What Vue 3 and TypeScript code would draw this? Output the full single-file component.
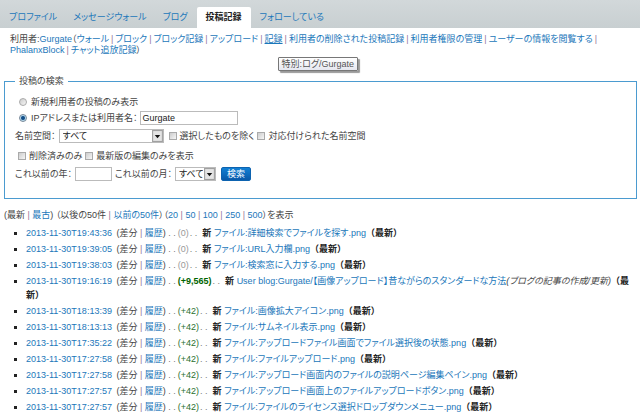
<script setup lang="ts">
import { ref } from 'vue'

interface Entry {
  time: string
  diff: string
  big?: boolean
  title: string
  comment?: string
}

const tabs: string[] = ['プロファイル', 'メッセージウォール', 'ブログ', '投稿記録', 'フォローしている']
const activeTab = ref('投稿記録')

const tools: string[] = [
  'ウォール',
  'ブロック',
  'ブロック記録',
  'アップロード',
  '記録',
  '利用者の削除された投稿記録',
  '利用者権限の管理',
  'ユーザーの情報を閲覧する',
  'PhalanxBlock',
  'チャット追放記録',
]

const limits: number[] = [20, 50, 100, 250, 500]

const mode = ref('user')
const user = ref('Gurgate')
const year = ref('')

const entries: Entry[] = [
  { time: '2013-11-30T19:43:36', diff: '0', title: 'ファイル:詳細検索でファイルを探す.png' },
  { time: '2013-11-30T19:39:05', diff: '0', title: 'ファイル:URL入力欄.png' },
  { time: '2013-11-30T19:38:03', diff: '0', title: 'ファイル:検索窓に入力する.png' },
  {
    time: '2013-11-30T19:16:19',
    diff: '+9,565',
    big: true,
    title: 'User blog:Gurgate/【画像アップロード】昔ながらのスタンダードな方法',
    comment: 'ブログの記事の作成/更新',
  },
  { time: '2013-11-30T18:13:39', diff: '+42', title: 'ファイル:画像拡大アイコン.png' },
  { time: '2013-11-30T18:13:13', diff: '+42', title: 'ファイル:サムネイル表示.png' },
  { time: '2013-11-30T17:35:22', diff: '+42', title: 'ファイル:アップロードファイル画面でファイル選択後の状態.png' },
  { time: '2013-11-30T17:27:58', diff: '+42', title: 'ファイル:ファイルアップロード.png' },
  { time: '2013-11-30T17:27:58', diff: '+42', title: 'ファイル:アップロード画面内のファイルの説明ページ編集ペイン.png' },
  { time: '2013-11-30T17:27:57', diff: '+42', title: 'ファイル:アップロード画面上のファイルアップロードボタン.png' },
  { time: '2013-11-30T17:27:57', diff: '+42', title: 'ファイル:ファイルのライセンス選択ドロップダウンメニュー.png' },
]
</script>

<template>
  <div class="page">
    <nav class="tabs">
      <a
        v-for="tab in tabs"
        :key="tab"
        href="#"
        class="tab"
        :class="{ active: tab === activeTab }"
        @click.prevent="activeTab = tab"
      >{{ tab }}</a>
    </nav>

    <div class="tools">
      利用者:<a href="#">Gurgate</a>（<template v-for="(tool, i) in tools" :key="tool"><span v-if="tool === '記録'" class="tip-anchor"><a href="#" class="hovered">{{ tool }}</a><span class="tip" role="tooltip">特別:ログ/Gurgate</span></span><a v-else href="#">{{ tool }}</a><span v-if="i < tools.length - 1" class="sep bar">|</span><wbr></template>）
    </div>

    <form class="search" @submit.prevent>
      <fieldset>
        <legend>投稿の検索</legend>
        <div class="row inset">
          <input id="newbie" v-model="mode" type="radio" name="mode" value="newbie">
          <label for="newbie">新規利用者の投稿のみ表示</label>
        </div>
        <div class="row inset">
          <input id="byuser" v-model="mode" type="radio" name="mode" value="user">
          <label id="byuser-label" for="byuser">IPアドレスまたは利用者名：</label>
          <input v-model="user" type="text" class="name" aria-labelledby="byuser-label">
        </div>
        <div class="row spaced">
          <label for="ns">名前空間：</label>
          <span class="select wide">
            <select id="ns"><option>すべて</option></select>
            <svg viewBox="0 0 10 11" aria-hidden="true"><rect x=".5" y=".5" width="9" height="10" fill="#e4e4e4" stroke="#a0a0a0" /><path d="M2.5 4.5h5L5 7.5z" fill="#111" /></svg>
          </span>
          <input id="invert" type="checkbox">
          <label for="invert">選択したものを除く</label>
          <input id="assoc" type="checkbox">
          <label for="assoc">対応付けられた名前空間</label>
        </div>
        <div class="row spaced edge">
          <input id="deleted" type="checkbox">
          <label for="deleted">削除済みのみ</label>
          <input id="top" type="checkbox">
          <label for="top">最新版の編集のみを表示</label>
        </div>
        <div class="row spaced">
          <label for="year">これ以前の年：</label>
          <input id="year" v-model="year" type="text" class="year">
          <label for="month">これ以前の月：</label>
          <span class="select">
            <select id="month"><option>すべて</option></select>
            <svg viewBox="0 0 10 11" aria-hidden="true"><rect x=".5" y=".5" width="9" height="10" fill="#e4e4e4" stroke="#a0a0a0" /><path d="M2.5 4.5h5L5 7.5z" fill="#111" /></svg>
          </span>
          <button type="submit">検索</button>
        </div>
      </fieldset>
    </form>

    <p class="pager">
      (最新<span class="sep"> | </span><a href="#">最古</a>) （以後の50件<span class="sep"> | </span><a href="#">以前の50件</a>）（<template v-for="(n, i) in limits" :key="n"><span v-if="i > 0" class="sep"> | </span><a href="#">{{ n }}</a></template>）を表示
    </p>

    <ul class="log">
      <li v-for="(e, i) in entries" :key="i">
        <a href="#" class="time">{{ e.time }}</a> (差分<span class="sep"> | </span><a href="#">履歴</a>)
        <span class="dots">. .</span>
        <span class="diff" :class="{ zero: e.diff === '0', big: e.big }">({{ e.diff }})</span>
        <span class="dots">. .</span>&nbsp;
        <b>新</b> <a href="#">{{ e.title }}</a>
        <em v-if="e.comment">({{ e.comment }})</em>
        <b class="latest">（最新）</b>
      </li>
    </ul>
  </div>
</template>

<style>
body {
  margin: 0;
  background: #fff;
}
</style>

<style scoped>
.page {
  font: 9px/14px "Liberation Sans", "Noto Sans CJK JP", sans-serif;
  font-feature-settings: "palt";
  color: #444;
  border-bottom: 1px solid #eee;
}

a {
  color: #1b77ba;
  text-decoration: none;
}

.tabs {
  display: flex;
  align-items: flex-end;
  height: 28px;
  padding-left: 1px;
  background: linear-gradient(#d2d8da, #c8cfd1);
}

.tab {
  box-sizing: border-box;
  height: 21px;
  padding: 0 8px;
  line-height: 21px;
}

.tab.active {
  margin: 0 1px;
  padding: 0 9px;
  border-radius: 2px 2px 0 0;
  background: #fff;
  color: #222;
  font-weight: bold;
}

.tools {
  padding: 6px 40px 0 10px;
  line-height: 11px;
}

.sep {
  color: #97779a;
}

.bar {
  margin: 0 2px;
}

.hovered {
  text-decoration: underline;
}

.tip-anchor {
  position: relative;
}

.tip {
  position: absolute;
  top: 23px;
  left: 13px;
  padding: 0 3px;
  border: 1px solid #777;
  border-radius: 1px;
  background: linear-gradient(#fff, #e6e7f0);
  box-shadow: 2px 2px 1px #999;
  color: #555;
  line-height: 12px;
  white-space: nowrap;
}

.search {
  padding: 18px 3px 0 4px;
}

fieldset {
  min-width: 0;
  margin: 0;
  padding: 7px 10px 15px;
  border: 1px solid #4b9bd0;
}

legend {
  padding: 0 4px;
}

.row {
  display: flex;
  align-items: center;
  gap: 3px;
  min-height: 14px;
  margin-bottom: 2px;
}

.row.inset {
  padding-left: 4px;
}

.row.spaced {
  margin-top: 4px;
}

.row.edge {
  margin-top: 6px;
  padding-left: 3px;
}

input,
select,
button {
  box-sizing: border-box;
  margin: 0;
  font: inherit;
  font-feature-settings: inherit;
  color: #222;
}

input[type="radio"],
input[type="checkbox"] {
  appearance: none;
  width: 8px;
  height: 8px;
  border: 1px solid #aaa;
  background: linear-gradient(135deg, #ccc, #f6f6f6);
}

input[type="radio"] {
  margin-right: 1px;
  border-radius: 50%;
}

input[type="radio"]:checked {
  border-color: #789;
  background: radial-gradient(circle, #124e88 35%, #b8dcf0 60%);
}

input[type="text"] {
  height: 14px;
  padding: 0 1px;
  border: 1px solid #bbb;
  background: #fff;
}

.name {
  width: 98px;
}

input.year {
  width: 37px;
}

.select {
  position: relative;
  display: flex;
  width: 41px;
  margin-right: 2px;
}

.select.wide {
  width: 105px;
}

select {
  appearance: none;
  width: 100%;
  height: 14px;
  padding: 0 12px 0 3px;
  border: 1px solid #bbb;
  border-radius: 0;
  background: #fff;
  line-height: 12px;
}

.select svg {
  position: absolute;
  top: 1px;
  right: 1px;
  width: 11px;
  height: 12px;
  pointer-events: none;
}

button {
  height: 14px;
  padding: 0 5px;
  border: 1px solid #0d63b0;
  border-radius: 2px;
  background: linear-gradient(#1280d4, #0858a8);
  color: #fff;
  line-height: 12px;
}

.pager {
  margin: 9px 4px 4px;
}

.log {
  margin: 0;
  padding: 0 4px 0 26px;
  list-style: square;
}

.log li {
  margin-bottom: 2px;
}

.log li::marker {
  color: #222;
}

.time {
  margin-right: 2px;
}

.dots {
  color: #777;
}

.diff {
  margin: 0 1px 0 2px;
  color: #2a7030;
}

.diff.zero {
  color: #999;
}

.diff.big {
  color: #006400;
  font-weight: bold;
}

b {
  color: #222;
}

.latest {
  font-feature-settings: normal;
}
</style>
